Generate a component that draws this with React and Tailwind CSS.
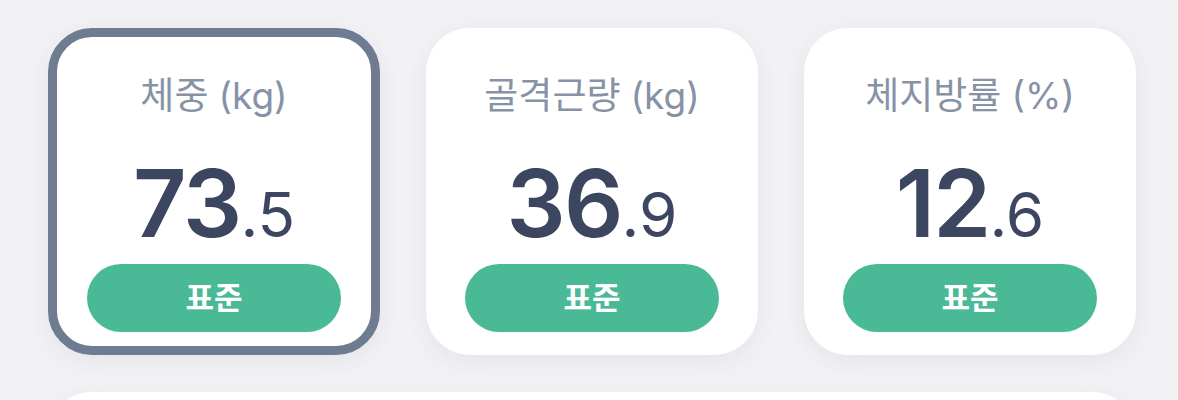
import React from "react";

const cards = [
  { title: "체중", unit: "(kg)", int: "73", dec: ".5", selected: true },
  { title: "골격근량", unit: "(kg)", int: "36", dec: ".9", selected: false },
  { title: "체지방률", unit: "(%)", int: "12", dec: ".6", selected: false },
];

function Card({ title, unit, int, dec, selected }) {
  return (
    <div
      className={
        "w-[332px] shrink-0 rounded-[44px] border-[9px] bg-white flex flex-col items-center pt-[39px] pb-[14px] shadow-[0_6px_24px_rgba(40,50,70,0.07)] " +
        (selected ? "border-[#6f7b91]" : "border-transparent")
      }
    >
      <div className="h-[40px] flex items-center text-[37px] leading-[40px] text-[#8693a6] whitespace-nowrap">
        <span>{title}</span>
        <span className="ml-[10px]">{unit}</span>
      </div>
      <div className="mt-[41px] h-[92px] flex items-baseline text-[#3c4660] leading-none">
        <span className="text-[93px] font-semibold tracking-[-0.02em]">{int}</span>
        <span className="text-[62px] font-normal">{dec}</span>
      </div>
      <div className="mt-[15px] w-[254px] h-[68px] rounded-full bg-[#4ab996] flex items-center justify-center text-white text-[31px] font-bold">
        표준
      </div>
    </div>
  );
}

export default function App() {
  return (
    <div
      className="min-h-[400px] bg-[#f2f2f5] overflow-hidden"
      style={{ fontFamily: 'Inter, "Noto Sans CJK KR", sans-serif' }}
    >
      <div className="flex gap-[46px] pl-[48px] pt-[28px]">
        {cards.map((c) => (
          <Card key={c.title} {...c} />
        ))}
      </div>
      <div className="mx-[48px] w-[1088px] mt-[37px] h-[200px] rounded-[44px] bg-white shadow-[0_6px_24px_rgba(40,50,70,0.07)]" />
    </div>
  );
}
